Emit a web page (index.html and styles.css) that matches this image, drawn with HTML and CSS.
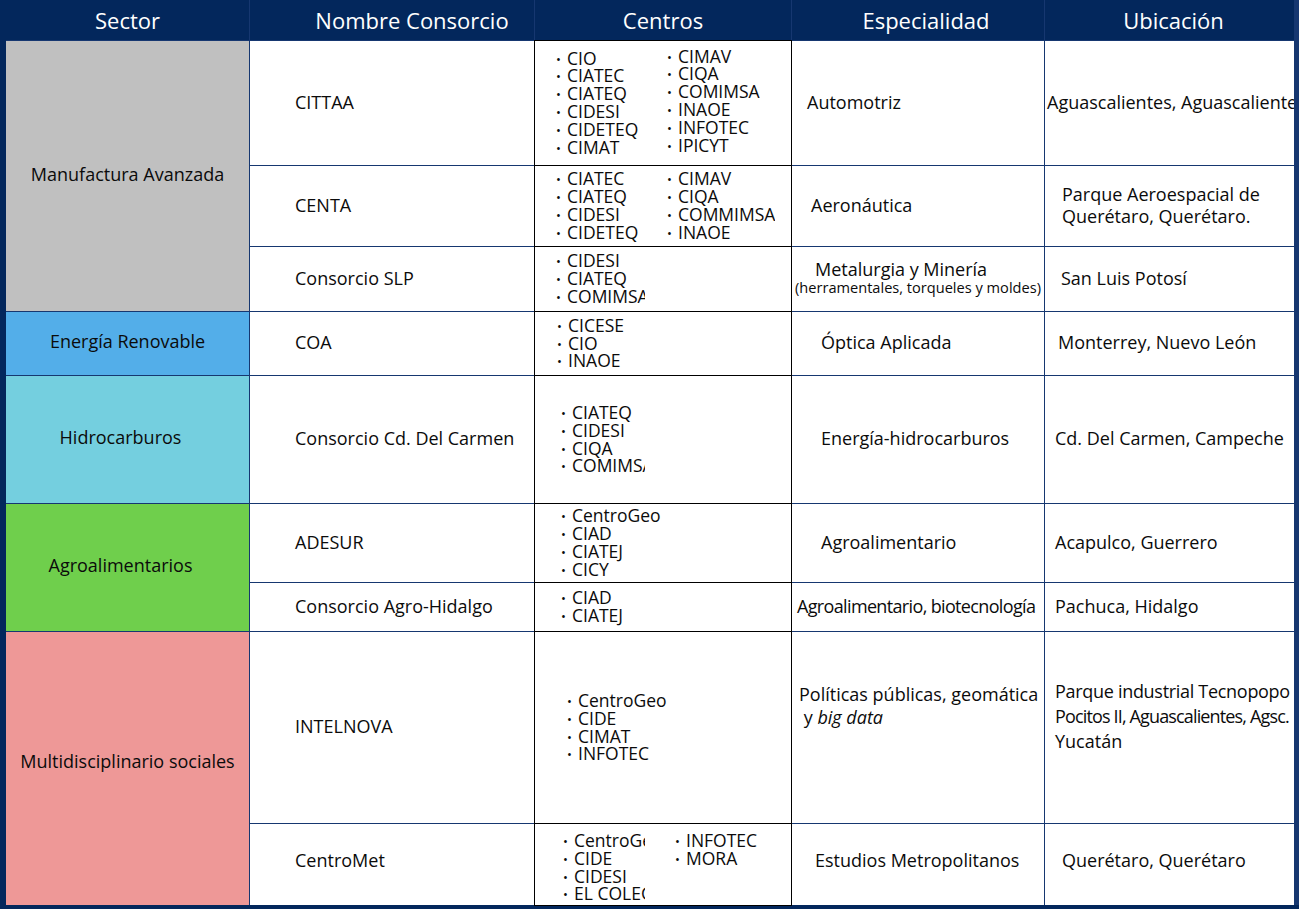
FILE: index.html
```html
<!DOCTYPE html>
<html lang="es">
<head>
<meta charset="utf-8">
<title>Consorcios</title>
<link rel="stylesheet" href="styles.css">
</head>
<body>
<div class="table">
  <div class="th">Sector</div>
  <div class="th th-name">Nombre Consorcio</div>
  <div class="th">Centros</div>
  <div class="th th-esp">Especialidad</div>
  <div class="th th-ubi">Ubicación</div>

  <!-- Manufactura Avanzada -->
  <div class="sector gray span3">Manufactura Avanzada</div>
  <div class="cell name">CITTAA</div>
  <div class="cell centros">
    <ul class="list">
      <li>CIO</li><li>CIATEC</li><li>CIATEQ</li><li>CIDESI</li><li>CIDETEQ</li><li>CIMAT</li>
    </ul>
    <ul class="list col2 up2">
      <li>CIMAV</li><li>CIQA</li><li>COMIMSA</li><li>INAOE</li><li>INFOTEC</li><li>IPICYT</li>
    </ul>
  </div>
  <div class="cell esp p15">Automotriz</div>
  <div class="cell ubi p2"><span class="nowrap">Aguascalientes, Aguascalientes</span></div>

  <div class="cell name">CENTA</div>
  <div class="cell centros">
    <ul class="list">
      <li>CIATEC</li><li>CIATEQ</li><li>CIDESI</li><li>CIDETEQ</li>
    </ul>
    <ul class="list col2">
      <li>CIMAV</li><li>CIQA</li><li>COMMIMSA</li><li>INAOE</li>
    </ul>
  </div>
  <div class="cell esp p19">Aeronáutica</div>
  <div class="cell ubi p17 lines22">Parque Aeroespacial de<br>Querétaro, Querétaro.</div>

  <div class="cell name">Consorcio SLP</div>
  <div class="cell centros">
    <ul class="list w89">
      <li>CIDESI</li><li>CIATEQ</li><li>COMIMSA</li>
    </ul>
  </div>
  <div class="cell esp stack">
    <span class="line p23">Metalurgia y Minería</span>
    <span class="line small p3">(herramentales, torqueles y moldes)</span>
  </div>
  <div class="cell ubi p16">San Luis Potosí</div>

  <!-- Energía Renovable -->
  <div class="sector blue">Energía Renovable</div>
  <div class="cell name">COA</div>
  <div class="cell centros">
    <ul class="list i22">
      <li>CICESE</li><li>CIO</li><li>INAOE</li>
    </ul>
  </div>
  <div class="cell esp p29">Óptica Aplicada</div>
  <div class="cell ubi p13">Monterrey, Nuevo León</div>

  <!-- Hidrocarburos -->
  <div class="sector cyan shift-left">Hidrocarburos</div>
  <div class="cell name">Consorcio Cd. Del Carmen</div>
  <div class="cell centros">
    <ul class="list i26 w84">
      <li>CIATEQ</li><li>CIDESI</li><li>CIQA</li><li>COMIMSA</li>
    </ul>
  </div>
  <div class="cell esp p29">Energía-hidrocarburos</div>
  <div class="cell ubi p10">Cd. Del Carmen, Campeche</div>

  <!-- Agroalimentarios -->
  <div class="sector green span2 shift-left">Agroalimentarios</div>
  <div class="cell name">ADESUR</div>
  <div class="cell centros">
    <ul class="list i26">
      <li>CentroGeo</li><li>CIAD</li><li>CIATEJ</li><li>CICY</li>
    </ul>
  </div>
  <div class="cell esp p29">Agroalimentario</div>
  <div class="cell ubi p10">Acapulco, Guerrero</div>

  <div class="cell name">Consorcio Agro-Hidalgo</div>
  <div class="cell centros">
    <ul class="list i26">
      <li>CIAD</li><li>CIATEJ</li>
    </ul>
  </div>
  <div class="cell esp p5 tight6">Agroalimentario, biotecnología</div>
  <div class="cell ubi p10">Pachuca, Hidalgo</div>

  <!-- Multidisciplinario sociales -->
  <div class="sector pink span2 lift">Multidisciplinario sociales</div>
  <div class="cell name">INTELNOVA</div>
  <div class="cell centros">
    <ul class="list i32">
      <li>CentroGeo</li><li>CIDE</li><li>CIMAT</li><li>INFOTEC</li>
    </ul>
  </div>
  <div class="cell esp stack lift44 lines23">
    <span class="line p7">Políticas públicas, geomática</span>
    <span class="line p7">&nbsp;y <em>big data</em></span>
  </div>
  <div class="cell ubi stack lift22 lines25">
    <span class="line p10 tight3">Parque industrial Tecnopopo</span>
    <span class="line p10 tight9">Pocitos II, Aguascalientes, Agsc.</span>
    <span class="line p10">Yucatán</span>
  </div>

  <div class="cell name lift10">CentroMet</div>
  <div class="cell centros">
    <ul class="list i28 w82 down4">
      <li>CentroGeo</li><li>CIDE</li><li>CIDESI</li><li>EL COLEGIO</li>
    </ul>
    <ul class="list col2b align-top">
      <li>INFOTEC</li><li>MORA</li>
    </ul>
  </div>
  <div class="cell esp p23 lift10">Estudios Metropolitanos</div>
  <div class="cell ubi p17 lift10">Querétaro, Querétaro</div>
</div>
</body>
</html>
```

FILE: styles.css
```css
html, body {
  margin: 0;
  padding: 0;
  background: #03275c;
}

body {
  width: 1299px;
  height: 909px;
  overflow: hidden;
  font-family: "Open Sans", "Noto Sans", sans-serif;
  color: #0b0b0b;
}

.table {
  display: grid;
  grid-template-columns: 243px 284px 256px 252px 249px;
  grid-template-rows: 40px 124px 80px 64px 63px 127px 78px 48px 191px 81px;
  gap: 1px;
  margin-left: 6px;
  background: #163770;
}

.th {
  background: #03275c;
  color: #ffffff;
  font-size: 22px;
  display: flex;
  align-items: center;
  justify-content: center;
}

.th-name { padding-left: 40px; }
.th-esp { padding-left: 16px; }
.th-ubi { padding-left: 8px; }

.sector {
  display: flex;
  align-items: center;
  justify-content: center;
  font-size: 18px;
  text-align: center;
  padding-bottom: 5px;
}

.span2 { grid-row: span 2; }
.span3 { grid-row: span 3; }

.gray  { background: #c0c0c0; }
.blue  { background: #53aee9; }
.cyan  { background: #74cfdf; }
.green { background: #6fcf4c; }
.pink  { background: #ee9897; }

.shift-left { padding-right: 14px; }
.lift { padding-bottom: 16px; }

.cell {
  background: #ffffff;
  display: flex;
  align-items: center;
  font-size: 18px;
  white-space: nowrap;
  padding-bottom: 3px;
}

.name {
  padding-left: 45px;
}

.lift10 { padding-bottom: 10px; }
.lift22 { padding-bottom: 22px; }
.lift44 { padding-bottom: 44px; }

.centros {
  outline: 1px solid #000;
  align-items: center;
  padding-bottom: 0;
}

.list {
  list-style: none;
  margin: 0;
  padding: 0 0 0 21px;
  font-size: 17.5px;
  line-height: 17.8px;
  overflow-x: clip;
  overflow-y: visible;
  flex: none;
}

.list li {
  height: 17.8px;
}

.list li::before {
  content: "•";
  display: inline-block;
  width: 11px;
  font-size: 13px;
  line-height: 0;
  vertical-align: 1px;
}

.list.col2 {
  padding-left: 0;
}

.centros > .list:first-child { width: 111px; }
.centros > .list.w89 { width: 89px; }
.centros > .list.w84 { width: 84px; }
.centros > .list.w82 { width: 82px; }

.list.i22 { padding-left: 22px; }
.list.i26 { padding-left: 26px; }
.list.i28 { padding-left: 28px; }
.list.i32 { padding-left: 32px; }

.list.col2b { padding-left: 30px; }
.list.align-top { align-self: flex-start; padding-top: 8px; }
.list.up2 { margin-top: -4px; }
.list.down4 { margin-top: 6px; }

.esp, .ubi { overflow-x: clip; }

.stack {
  flex-direction: column;
  align-items: flex-start;
  justify-content: center;
}

.stack .line {
  display: block;
  line-height: 18px;
}

.stack .line.small {
  font-size: 14.6px;
  line-height: 18px;
}

.lines22 { line-height: 22px; }
.lines23 .line { line-height: 23px; }
.lines25 .line { line-height: 25px; }

.tight3 { letter-spacing: -0.3px; }
.tight6 { letter-spacing: -0.65px; }
.tight9 { letter-spacing: -0.85px; }

.p2  { padding-left: 2px; }
.p3  { padding-left: 3px; }
.p5  { padding-left: 5px; }
.p7  { padding-left: 7px; }
.p10 { padding-left: 10px; }
.p13 { padding-left: 13px; }
.p15 { padding-left: 15px; }
.p16 { padding-left: 16px; }
.p17 { padding-left: 17px; }
.p19 { padding-left: 19px; }
.p23 { padding-left: 23px; }
.p29 { padding-left: 29px; }

.nowrap { white-space: nowrap; }

em { font-style: italic; }
```
